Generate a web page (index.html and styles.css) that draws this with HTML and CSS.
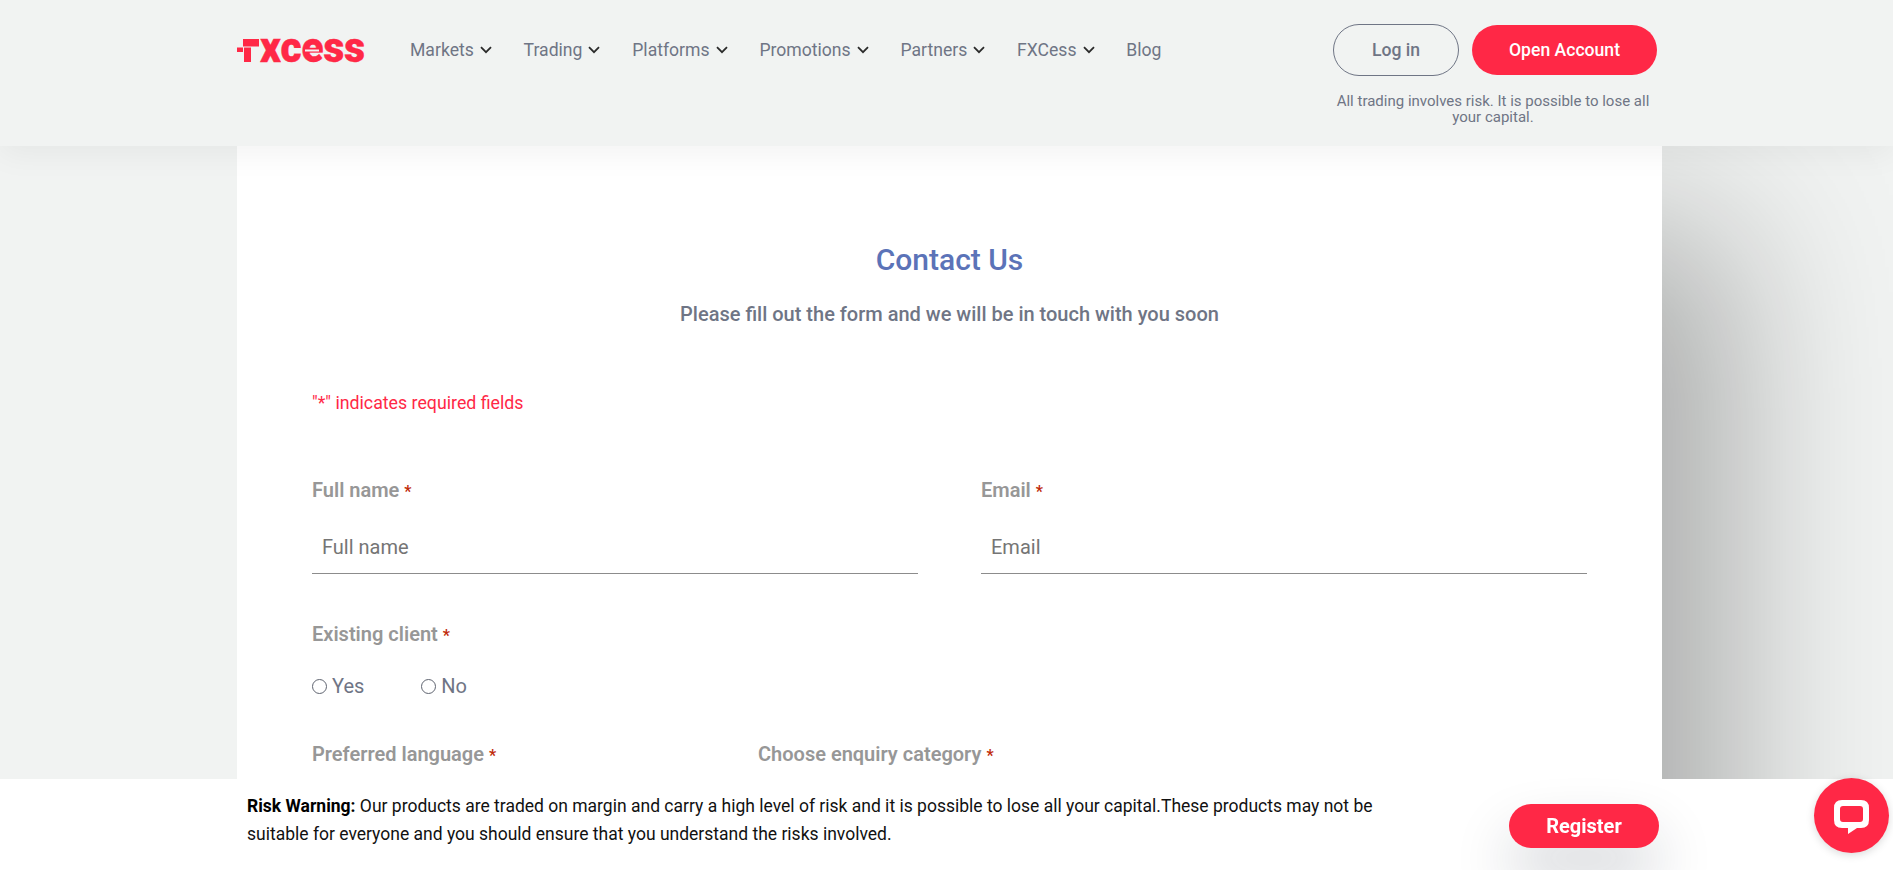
FILE: index.html
```html
<!DOCTYPE html>
<html lang="en">
<head>
<meta charset="utf-8">
<title>Contact Us</title>
<link rel="stylesheet" href="styles.css">
</head>
<body>
<header class="site-header">
  <div class="header-inner">
    <a class="logo" href="#" aria-label="FXCess">
      <svg class="logo-svg" width="128" height="24" viewBox="0 0 128 24">
        <rect class="logo-red" x="6" y="0" width="16" height="7.5"/>
        <rect class="logo-red" x="0" y="8.5" width="6" height="4.5"/>
        <rect class="logo-red" x="7" y="8.5" width="7" height="14.5"/>
        <text class="logo-text" x="23" y="23" textLength="105" lengthAdjust="spacingAndGlyphs">xcess</text>
        <rect class="logo-cut" x="68" y="10.5" width="14" height="2"/>
      </svg>
    </a>
    <nav class="main-nav">
      <a class="nav-item" href="#">Markets <svg class="chev" width="12" height="8" viewBox="0 0 12 8"><path d="M1 1.2L6 6.2L11 1.2"/></svg></a>
      <a class="nav-item" href="#">Trading <svg class="chev" width="12" height="8" viewBox="0 0 12 8"><path d="M1 1.2L6 6.2L11 1.2"/></svg></a>
      <a class="nav-item" href="#">Platforms <svg class="chev" width="12" height="8" viewBox="0 0 12 8"><path d="M1 1.2L6 6.2L11 1.2"/></svg></a>
      <a class="nav-item" href="#">Promotions <svg class="chev" width="12" height="8" viewBox="0 0 12 8"><path d="M1 1.2L6 6.2L11 1.2"/></svg></a>
      <a class="nav-item" href="#">Partners <svg class="chev" width="12" height="8" viewBox="0 0 12 8"><path d="M1 1.2L6 6.2L11 1.2"/></svg></a>
      <a class="nav-item" href="#">FXCess <svg class="chev" width="12" height="8" viewBox="0 0 12 8"><path d="M1 1.2L6 6.2L11 1.2"/></svg></a>
      <a class="nav-item" href="#">Blog</a>
    </nav>
    <div class="header-actions">
      <div class="action-buttons">
        <a class="btn btn-outline" href="#">Log in</a>
        <a class="btn btn-red" href="#">Open Account</a>
      </div>
      <p class="risk-short">All trading involves risk. It is possible to lose all your capital.</p>
    </div>
  </div>
</header>

<main class="card">
  <h1 class="title">Contact Us</h1>
  <p class="subtitle">Please fill out the form and we will be in touch with you soon</p>
  <p class="required-note">"*" indicates required fields</p>
  <form class="contact-form">
    <div class="row-two">
      <div class="field">
        <label class="field-label">Full name <span class="req">*</span></label>
        <input class="text-input" type="text" placeholder="Full name">
      </div>
      <div class="field">
        <label class="field-label">Email <span class="req">*</span></label>
        <input class="text-input" type="text" placeholder="Email">
      </div>
    </div>
    <div class="field-radio">
      <div class="field-label">Existing client <span class="req">*</span></div>
      <div class="radios">
        <label class="radio"><span class="radio-dot"></span>Yes</label>
        <label class="radio"><span class="radio-dot"></span>No</label>
      </div>
    </div>
    <div class="row-three">
      <div class="field-label">Preferred language <span class="req">*</span></div>
      <div class="field-label">Choose enquiry category <span class="req">*</span></div>
    </div>
  </form>
</main>

<aside class="risk-bar">
  <p class="risk-text"><strong>Risk Warning:</strong> Our products are traded on margin and carry a high level of risk and it is possible to lose all your capital.These products may not be suitable for everyone and you should ensure that you understand the risks involved.</p>
  <a class="btn-register" href="#">Register</a>
</aside>

<a class="chat" href="#" aria-label="Chat">
  <svg width="35" height="34" viewBox="0 0 35 34"><path fill-rule="evenodd" d="M8 0H27Q35 0 35 8V20Q35 28 27 28H23L14 34V28H8Q0 28 0 20V8Q0 0 8 0ZM9 6Q6 6 6 9V19Q6 22 9 22H26Q29 22 29 19V9Q29 6 26 6Z"/></svg>
</a>
</body>
</html>
```
FILE: styles.css
```css
* { box-sizing: border-box; }
html, body { margin: 0; height: 870px; overflow: hidden; }
body { background: #f1f3f2; font-family: Roboto, "Liberation Sans", sans-serif; color: #6b7280; }
a { text-decoration: none; color: inherit; }
p, h1 { margin: 0; }

.site-header { position: relative; z-index: 2; height: 146px; background: #f1f3f2; box-shadow: 0 8px 30px rgba(0,0,0,.05); }
.header-inner { width: 1420px; margin-left: 237px; display: flex; align-items: flex-start; }
.logo { display: block; margin-top: 39px; height: 24px; }
.logo-svg { display: block; overflow: visible; }
.logo-red { fill: #ff2846; }
.logo-text { fill: #ff2846; stroke: #ff2846; stroke-width: .4; font-family: Roboto, sans-serif; font-weight: 900; font-size: 42px; }
.logo-cut { fill: #f1f3f2; }
.main-nav { display: flex; gap: 31.8px; margin-left: 45px; margin-top: 38px; }
.nav-item { display: flex; align-items: center; gap: 6px; font-size: 17.6px; line-height: 24px; color: #6f7585; white-space: nowrap; }
.chev { fill: none; stroke: #2b2b2b; stroke-width: 1.8; }
.header-actions { margin-left: auto; width: 324px; margin-top: 24px; }
.action-buttons { display: flex; gap: 13px; align-items: center; height: 52px; }
.btn { display: flex; align-items: center; justify-content: center; border-radius: 26px; font-size: 17.6px; font-weight: 500; }
.btn-outline { width: 126px; height: 52px; border: 1px solid #6f7585; color: #6f7585; }
.btn-red { width: 185px; height: 50px; background: #ff2846; color: #fff; }
.risk-short { width: 320px; margin-top: 18px; font-size: 15px; line-height: 15.5px; text-align: center; color: #6f7585; }

.card { position: relative; z-index: 1; width: 1425px; min-height: 1400px; margin-left: 237px; padding: 97px 75px 0; background: #fff; }
.card::before { content: ""; position: absolute; inset: 0; z-index: -1; box-shadow: 75px 80px 160px rgba(0,0,0,.29); clip-path: inset(-400px -400px -400px 0); }
.title { font-size: 30px; line-height: 34px; font-weight: 500; color: #5b73b8; text-align: center; }
.subtitle { margin-top: 23px; font-size: 20px; line-height: 28px; font-weight: 500; color: #6f7585; text-align: center; }
.required-note { margin-top: 63px; font-size: 17.75px; line-height: 24px; color: #ff2846; }
.contact-form { margin-top: 63px; }
.row-two { display: grid; grid-template-columns: 606px 606px; gap: 63px; }
.field-label { display: block; font-size: 20px; line-height: 24px; font-weight: 600; color: #979797; }
.req { color: #c02b0a; font-size: 16px; }
.text-input { display: block; width: 100%; height: 50px; margin-top: 20px; padding: 0 10px 3px; border: 0; border-bottom: 1px solid #8c8c8c; background: transparent; outline: 0; font-family: Roboto, sans-serif; font-size: 20px; color: #6f7585; }
.text-input::placeholder { color: #757575; opacity: 1; }
.field-radio { margin-top: 48px; }
.radios { display: flex; gap: 57px; margin-top: 26px; }
.radio { display: flex; align-items: center; gap: 5px; font-size: 20px; line-height: 24px; color: #6f7585; }
.radio-dot { width: 15px; height: 15px; border: 1px solid #5f6470; border-radius: 50%; background: #fff; }
.row-three { display: grid; grid-template-columns: repeat(3, 1fr); gap: 63px; margin-top: 44px; }

.risk-bar { position: fixed; z-index: 3; left: 0; right: 0; bottom: 0; height: 91px; background: #fff; }
.risk-text { position: absolute; left: 247px; top: 13px; width: 1150px; font-size: 17.5px; line-height: 28px; color: #111; }
.risk-text strong { color: #000; font-weight: 700; }
.btn-register { position: absolute; left: 1509px; top: 25px; width: 150px; height: 44px; display: flex; align-items: center; justify-content: center; border-radius: 22px; background: #ff2846; color: #fff; font-size: 20px; font-weight: 700; box-shadow: 0 32px 60px rgba(20,30,50,.2); }
.chat { position: fixed; z-index: 4; left: 1814px; top: 778px; width: 75px; height: 75px; border-radius: 50%; background: #ff2846; display: flex; align-items: center; justify-content: center; box-shadow: 0 2px 8px rgba(0,0,0,.15); }
.chat svg { fill: #fff; display: block; margin-top: 3px; }
```
